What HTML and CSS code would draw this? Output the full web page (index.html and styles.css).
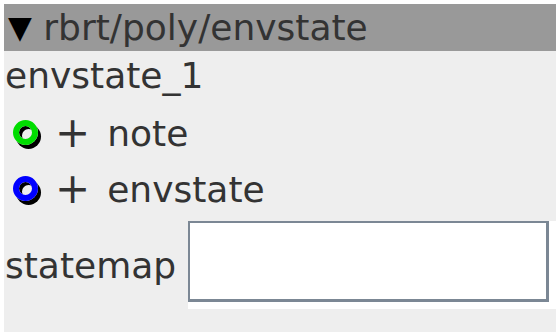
FILE: index.html
```html
<!DOCTYPE html>
<html lang="en">
<head>
    <meta charset="UTF-8">
    <title>envstate</title>
    <link rel="stylesheet" href="styles.css">
</head>
<body>
    <div class="panel">
        <div class="header"><span class="arrow">&#9660;</span> rbrt/poly/envstate</div>
        <div class="name">envstate_1</div>
        <div class="port">
            <span class="ring green"></span>
            <span class="plus">+</span>
            <span class="label">note</span>
        </div>
        <div class="port">
            <span class="ring blue"></span>
            <span class="plus">+</span>
            <span class="label">envstate</span>
        </div>
        <div class="field">
            <label for="statemap">statemap</label>
            <div class="box"><input type="text" id="statemap"></div>
        </div>
    </div>
</body>
</html>
```

FILE: styles.css
```css
body {
  margin: 4px;
  background-color: #fff;
  font-family: "DejaVu Sans", sans-serif;
  color: #333;
}
.panel {
  width: 552px;
  height: 328px;
  background-color: #eee;
  font-size: 36px;
}
.header {
  background-color: #999;
  height: 47px;
  line-height: 46px;
  padding-left: 4px;
  white-space: nowrap;
}
.arrow {
  color: #000;
  font-size: 31px;
  vertical-align: 2px;
}
.name {
  height: 54px;
  line-height: 50px;
  padding-left: 1px;
}
.port {
  display: flex;
  align-items: center;
  height: 56px;
  padding-left: 9px;
}
.ring {
  flex: none;
  width: 13px;
  height: 13px;
  border: 6px solid;
  border-radius: 50%;
  box-shadow: 3px 4px 0 0 #000, inset 3px 3px 0 0 #000;
  margin-top: -2px;
}
.ring.green { border-color: #0d0; }
.ring.blue { border-color: #00f; }
.plus {
  margin-left: 17px;
  font-size: 42px;
  line-height: 40px;
}
.label {
  margin-left: 17px;
}
.field {
  display: flex;
  align-items: center;
  margin-top: 4px;
  padding-left: 1px;
}
.field label {
  margin-right: 12px;
}
.box {
  border-style: solid;
  border-color: transparent #fff #fff transparent;
  border-width: 0 7px 7px 0;
}
.box input {
  display: block;
  margin: 0;
  padding: 0;
  border-style: solid;
  border-color: #7b8794;
  border-width: 2px 3px 3px 2px;
  background-color: #fff;
  box-sizing: border-box;
  width: 361px;
  height: 81px;
}
```
